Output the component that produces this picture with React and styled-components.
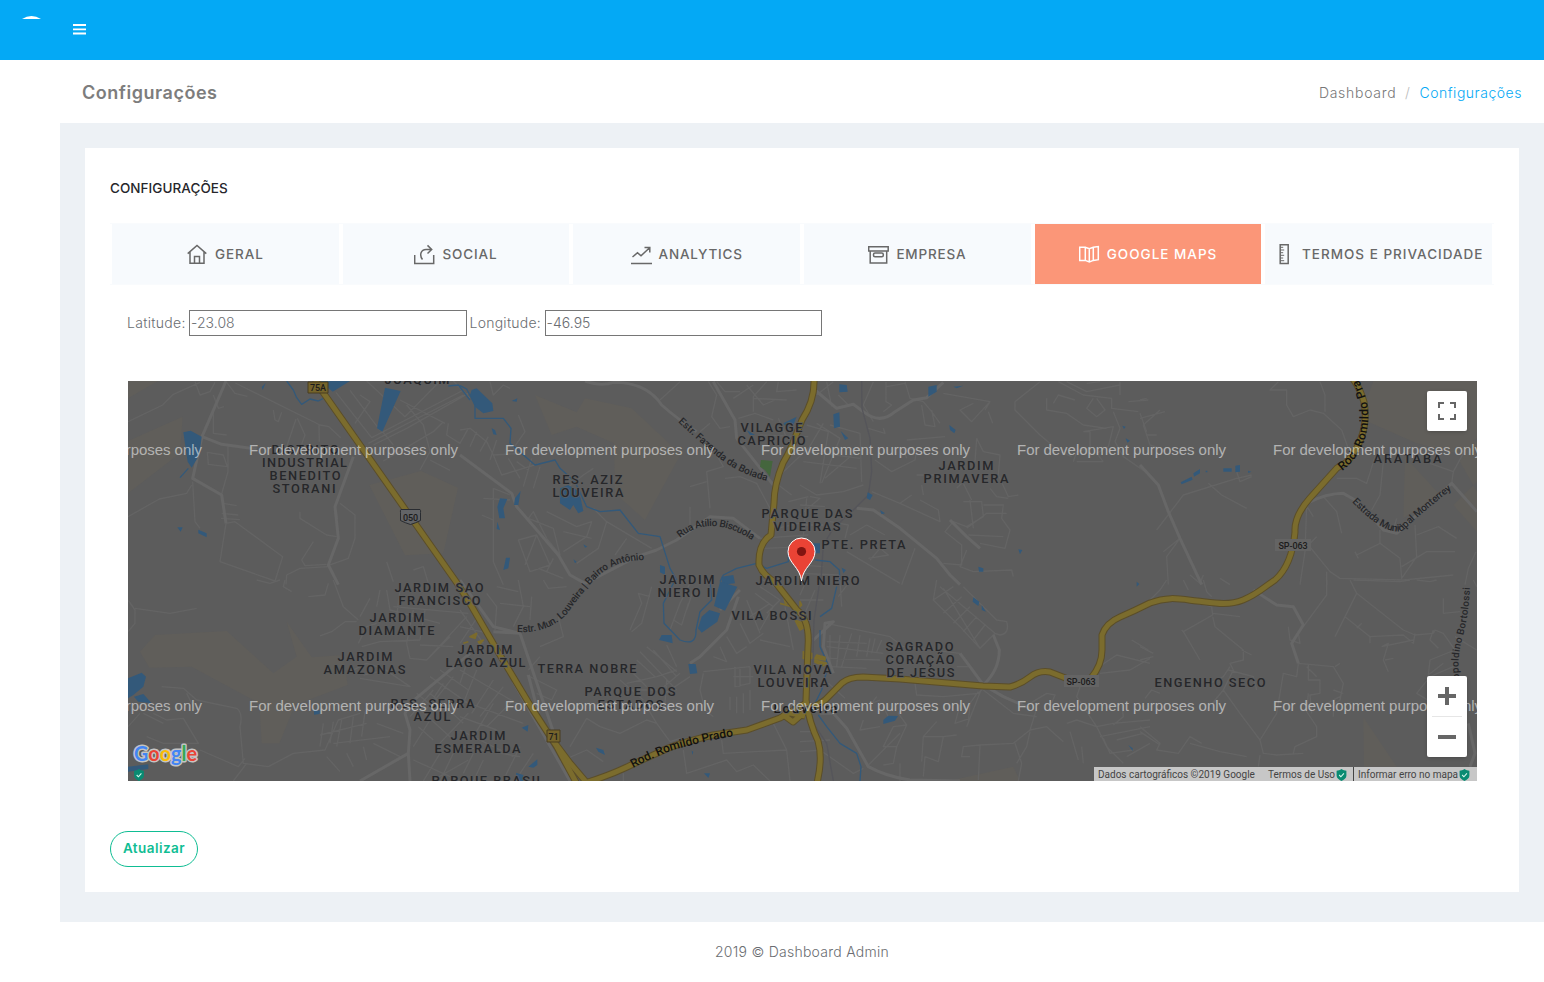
import React from 'react';
import styled, { createGlobalStyle, css } from 'styled-components';

const GlobalStyle = createGlobalStyle`
  *, *::before, *::after { box-sizing: border-box; }
  body {
    margin: 0;
    background: #fff;
    color: #6a6d71;
    font: 300 14px/24px Inter, "Open Sans", sans-serif;
  }
`;

const Navbar = styled.header`
  display: flex;
  height: 60px;
  background: #04a9f5;
`;
const Brand = styled.div`
  width: 60px;
  padding: 15px 0 0 22px;
  line-height: 0;
`;
const MenuButton = styled.button`
  width: 39px;
  height: 58px;
  padding: 0;
  border: 0;
  background: none;
  display: grid;
  place-items: center;
`;
const Content = styled.main`
  margin-left: 60px;
`;
const TitleBar = styled.div`
  display: flex;
  justify-content: space-between;
  align-items: center;
  height: 63px;
  padding: 3px 22px 0;
`;
const PageTitle = styled.h4`
  margin: 0;
  font-size: 18px;
  font-weight: 600;
  letter-spacing: 0.53px;
  color: #7d7d7d;
`;
const Crumbs = styled.nav`
  display: flex;
  font-size: 14px;
  letter-spacing: 0.72px;
  color: #777;
`;
const Slash = styled.span`
  width: 23px;
  text-align: center;
  color: #bbb;
`;
const Current = styled.span`
  color: #04a9f5;
  letter-spacing: 0.53px;
`;
const Backdrop = styled.div`
  height: 799px;
  padding: 25px 25px 30px;
  background: #edf1f5;
`;
const Card = styled.section`
  height: 744px;
  padding: 28px 25px 25px;
  background: #fff;
`;
const CardTitle = styled.h3`
  margin: 0 0 23px;
  font-size: 13.5px;
  font-weight: 500;
  line-height: 24px;
  letter-spacing: 0.05px;
  color: #26262b;
`;
const Tabs = styled.ul`
  display: flex;
  height: 62px;
  margin: 0;
  padding: 0;
  list-style: none;
  border: solid #f9fbfd;
  border-width: 1px 0;
`;
const Tab = styled.li`
  flex: 1 1 0;
  min-width: 0;
  margin: 0 2px;
  display: flex;
  align-items: center;
  justify-content: center;
  gap: 7px;
  white-space: nowrap;
  font-size: 13.5px;
  font-weight: 550;
  letter-spacing: ${(p) => p.$track};
  color: #686868;
  background: #f7fafd;
  ${(p) => p.$active && css`
    color: #fff;
    background: #fb9678;
  `}
`;
const Fields = styled.div`
  display: flex;
  align-items: center;
  height: 26px;
  margin: 25px 0 45px 17px;
`;
const FieldLabel = styled.label`
  width: ${(p) => p.$width}px;
  white-space: nowrap;
  letter-spacing: ${(p) => p.$track};
`;
const Field = styled.input`
  width: 277.5px;
  height: 26px;
  margin-right: 3px;
  padding: 0 1px 2px;
  border: 1px solid #767676;
  outline: 0;
  color: #6a6d71;
  font: inherit;
  letter-spacing: 0.05px;
`;
const MapFrame = styled.div`
  position: relative;
  width: 1349px;
  height: 400px;
  margin: 0 0 50px 18px;
  overflow: hidden;
  background: #5c5c5c;
`;
const MapSvg = styled.svg`
  display: block;
`;
const MapControl = styled.div`
  position: absolute;
  right: 10px;
  ${(p) => (p.$bottom ? `bottom: ${p.$bottom}px;` : 'top: 10px;')}
  width: 40px;
  height: ${(p) => p.$height}px;
  border-radius: 2px;
  background: #fff;
  box-shadow: 0 1px 4px -1px rgba(0, 0, 0, 0.3);
`;
const Attribution = styled.div`
  position: absolute;
  right: 0;
  bottom: 0;
  display: flex;
  align-items: center;
  width: 383px;
  height: 14px;
  background: rgba(245, 245, 245, 0.7);
  font: 400 10px/14px Roboto, sans-serif;
  color: #444;
  white-space: nowrap;
`;
const Credit = styled.span`
  display: flex;
  align-items: center;
  height: 14px;
  width: ${(p) => p.$width}px;
  padding: 1px 0 0 4px;
  gap: 1px;
  border-left: ${(p) => (p.$line ? '1px solid #444' : '0')};
`;
const UpdateButton = styled.button`
  display: block;
  width: 88px;
  height: 36px;
  padding: 0 0 2px;
  border: 1px solid #0fbd93;
  border-radius: 18px;
  background: #fff;
  color: #0fbd93;
  font: 600 13.5px Inter, sans-serif;
  letter-spacing: 0.45px;
`;
const Footer = styled.footer`
  height: 60px;
  line-height: 60px;
  text-align: center;
  letter-spacing: 0.26px;
`;

const icons = {
  home: <><path d="M.7 9.6 10 1.5l9.300 8.100M3 8v11.300h14V8" /><path d="M7.500 19v-6.500h5V19" /></>,
  share: <><path d="M.7 11v8.400h19V11" /><path d="M8.500 15.500C5 11 7 5.500 12 5.500h5.500M13.500 1.400l4.200 4.100-4.200 4" /></>,
  chart: <><path d="M0 19.500h21M1.500 13l5-4.200 3.500 3 8.600-8M13.500 3.600h5.300v5" /></>,
  box: <><path d="M.7 2.700h19.500v4.200H.7zM2.200 6.900v12.200h16.500V6.900" /><rect x="5.500" y="9" width="9.800" height="3.800" rx="1.500" /></>,
  map: <><path d="M.7 3.200h5.600l4 1.400 4-1.400 5-.7v13.200l-5 .7-4 1.600-4-1.600H.7zM6.300 3.200v13.200M10.300 4.600V18M14.300 3.200v13.200" /></>,
  ruler: <><path d="M6.200.7h8v18.800h-8z" /><path d="M6.200 3.300h3M6.200 6h4M6.200 8.700h3M6.200 11.300h4M6.200 14h3M6.200 16.700h4" strokeWidth="1" /></>,
};
const TabIcon = ({ name }) => (
  <svg width="21" height="21" viewBox="0 0 21 21" fill="none" stroke="currentColor" strokeWidth="1.5">{icons[name]}</svg>
);

const Shield = (props) => (
  <svg width="11" height="12" viewBox="0 0 11 12" {...props}>
    <path d="M5.5 0C7 1.2 8.8 1.6 10.4 1.7v5.1c0 2.4-2.5 3.8-4.9 5.2C3.1 10.6.6 9.2.6 6.8V1.7C2.2 1.6 4 1.2 5.5 0z" fill="#098b72" />
    <path d="m3.2 6 1.7 1.8 3-3.5" fill="none" stroke="#d5f7ed" strokeWidth="1.1" />
  </svg>
);

const tabs = [
  ['home', 'GERAL', '0.9px'],
  ['share', 'SOCIAL', '0.9px'],
  ['chart', 'ANALYTICS', '0.8px'],
  ['box', 'EMPRESA', '0.8px'],
  ['map', 'GOOGLE MAPS', '1px'],
  ['ruler', 'TERMOS E PRIVACIDADE', '1px'],
];

// Neighbourhood names: text, left edge, baseline, width.
const places = [
  ['JOAQUIM', 385, 384.5, 65], ['DISTRITO', 272, 455, 67], ['INDUSTRIAL', 262.5, 467.5, 85],
  ['BENEDITO', 270, 480.5, 71], ['STORANI', 273, 493.5, 63], ['JARDIM SAO', 395, 592.5, 89],
  ['FRANCISCO', 399, 605.5, 82], ['JARDIM', 370, 622.5, 55], ['DIAMANTE', 359, 635.5, 76],
  ['JARDIM', 338, 661.5, 55], ['AMAZONAS', 324, 674.5, 82], ['JARDIM', 458, 654.5, 55],
  ['LAGO AZUL', 446, 667.5, 80], ['RES. SERRA', 391, 708.5, 84], ['AZUL', 414, 721.5, 37],
  ['JARDIM', 451, 740.5, 55], ['ESMERALDA', 435, 753.5, 86], ['PARQUE BRASIL', 432, 785.5, 112],
  ['TERRA NOBRE', 538, 673.5, 99], ['PARQUE DOS', 585, 696.5, 91], ['ESTADOS', 598, 709.5, 66],
  ['RES. AZIZ', 553, 484.5, 70], ['LOUVEIRA', 553, 497.5, 71], ['VILAGGE', 741, 432.5, 62],
  ['CAPRICIO', 738, 445.5, 68], ['PARQUE DAS', 762, 518.5, 91], ['VIDEIRAS', 774, 531.5, 67],
  ['PTE. PRETA', 822, 549.5, 84], ['JARDIM NIERO', 756, 585.5, 104], ['JARDIM', 660, 584.5, 55],
  ['NIERO II', 658, 597.5, 58], ['VILA BOSSI', 732, 620.5, 80], ['VILA NOVA', 754, 674.5, 78],
  ['LOUVEIRA', 758, 687.5, 71], ['SAGRADO', 886, 651.5, 68], ['CORAÇÃO', 886, 664.5, 69],
  ['DE JESUS', 887, 677.5, 68], ['JARDIM', 939, 470.5, 55], ['PRIMAVERA', 924, 483.5, 85],
  ['ARATABA', 1374, 463.5, 68], ['ENGENHO SECO', 1155, 687.5, 111],
];

// Names that follow a road: id, path, text, length, colour, size.
const roadNames = [
  ['rn1', 'M678 422 Q695 438 712 452 Q735 473 767 481', 'Estr. Fazenda da Boiada', 108, '#26272a', 10],
  ['rn2', 'M680 538 Q710 513 752 540', 'Rua Atílio Biscuola', 78, '#26272a', 10],
  ['rn3', 'M517 632 Q548 634 567 614 Q592 579 606 570 Q622 560 645 560', 'Estr. Mun. Louveira | Bairro Antônio', 154, '#26272a', 10],
  ['rn4', 'M633 768 Q650 759 670 751 Q700 742 735 736', 'Rod. Romildo Prado', 106, '#111', 12],
  ['rn5', 'M1342 471 Q1371 449 1368 408 Q1364 384 1348 362', 'Rod. Romildo Prado', 116, '#111', 12],
  ['rn6', 'M1352 502 Q1387 538 1404 530 Q1416 517 1455 487', 'Estrada Municipal Monterrey', 125, '#26272a', 10],
  ['rn7', 'M1462 690 Q1455 665 1462 640 Q1469 615 1470 585', 'Leopoldino Bortolossi', 104, '#26272a', 10],
];

const highways = [
  'M315 379 320 388 457 583 472 607 497 650 533 710 557 747 577 784',
  'M555 743 570 763 587 783',
  'M585 783 Q608 776 627 767 T660 752 Q672 745 713 735 L747 730 780 718 808 702',
  'M805 710Q822 705 830 695L842 683Q849 677 863 677L900 679 983 686 1010 687Q1021 684 1030 677T1050 672L1068 679',
  'M1091 678Q1102 665 1102 650V635Q1106 623 1120 617T1150 603C1168 596 1180 599 1197 601S1228 606 1243 600 1264 587 1275 580Q1292 565 1295 532Q1294 516 1310 498L1337 468 1347 462Q1370 434 1364 402 1360 388 1353 379',
  'M814 379Q815 400 802 420L798 430Q791 450 783 463 774 485 774 503L771 535Q758 543 759 565 763 575 775 582L797 610Q810 620 808 647L806 700Q809 722 818 741 823 758 817 783',
  'M782 714 793 722 808 709M785 712 805 716',
];

const tileTop = 375;
const tileBottom = 580;
const tiles = [
  {
    x: 120, y: tileTop,
    land: 'M24 18h90L24 70zM188 125 180 235 24 355V198zM748 330 903 288 1014 338 970 535 855 541z',
    main: 'M318 18 246 185 305 208 410 222M246 185 218 310 305 360 318 445M645 395 655 490 625 570 655 629M700 245 645 395 650 435',
    roads: 'M24 140 128 90 160 58 240 22M225 20 240 60 270 50 285 22M320 22 345 55 382 64M346 24 600 150 627 155 662 188M280 110 280 175 320 180M280 60 295 100 312 95M460 105 465 135 475 140 485 112M528 132 500 215 535 235 555 180 532 130M597 150 598 200M262 232 310 240 322 275 265 268zM324 210 324 290 304 360M218 320 225 440 240 460M24 425 118 372 200 355 215 330M310 385 350 392M305 415 355 420M303 430 360 434M318 445 345 440 488 545 465 618 300 560zM540 410 540 430 620 480 650 485M580 500 545 555 555 572 620 568M660 385 705 420 705 490 685 550 630 570M625 575 540 580 500 600 498 628M648 52 755 188M690 46 780 166M740 18 855 125 960 18M720 60 750 80 705 145M755 188 1025 48M745 205 1030 60M760 210 860 160 1045 55M860 90 910 150 930 230 900 285M840 75 975 145M780 160 820 210M790 258 940 170 970 140M930 255 990 286M985 145 980 180 1020 205 1045 160M1000 18 1050 70M800 560 820 620M880 585 910 575 925 625',
    water: 'M190 172 212 167 245 185 238 240 215 278 203 260zM795 38 842 48 787 170 771 160zM602 18H690L638 50zM437 24 428 45 425 36zM172 457 188 457 182 470zM235 464 260 475 260 487 235 475z',
    stream: 'M500 18 520 45 530 68 545 88 570 72 595 78 620 65M205 280 180 308M985 33 1015 30 1050 75',
  },
  {
    x: 460, y: tileTop,
    land: 'M225 60 350 112 375 70 515 100 662 238 555 435 465 355 462 205 350 155 275 180z',
    main: 'M375 18Q425 35 460 22 Q560 22 605 90 Q650 130 710 170M0 240 155 355 170 395 295 540 330 600 375 625M900 490 820 430 750 425 650 495 590 525 530 545 375 625M760 20 825 135 830 190 940 330',
    roads: 'M745 20 770 60 755 125 780 160 810 155M770 20 795 50 840 50M600 75 660 20M820 70 880 30M860 30 910 90 945 75M880 70 980 75M920 20 880 65 880 110M955 20 950 50 1010 45M720 170 750 145M835 130 885 115 940 135M955 130 980 190M900 180 1045 185M960 300 1045 220M955 330 995 360M1045 365 985 380M930 400 890 325 840 305 795 310M770 240 790 275 740 290 750 400M690 335 740 320M690 395 690 470M90 20 100 60 130 30 150 40M0 165 30 160 80 200 100 240 180 235M50 170 30 215M85 185 60 230M110 195 90 255M160 220 195 170 175 120M100 240 125 300 240 265M145 250 180 310M215 250 190 335M240 275 220 340M170 260 205 285M100 340 150 360M70 370 150 375M65 420 100 435M100 340 100 560 130 629M205 430 280 460 300 540 260 490 220 410zM175 495 230 480 270 570 210 590zM230 480 195 570M260 410 350 455 395 440 380 485 310 530M310 470 395 490M320 340 370 300 400 280M400 400 440 440 575 520M440 440 415 520 350 565M500 490 465 540M950 460 1040 440M900 490 1045 480M910 520 1045 515M280 550 260 590M235 580 310 610',
    water: 'M35 45 50 40 97 85 100 108 70 115 45 95 30 60zM95 160 105 165 110 180 100 178zM155 78 172 70 170 80zM300 340 325 330 350 345 362 370 370 408 355 415 340 390 330 405 300 385zM182 348 175 390 162 390 165 370zM120 370 142 372 130 400 135 430 118 430 112 395zM112 440 120 465 110 462zM138 548 150 548 145 580 130 585zM970 145 1010 125 1000 150 975 152zM860 165 885 180 870 180zM600 570 615 575 615 600 600 592zM785 605 820 600 825 625 785 629zM370 508 382 515 375 518zM340 553 350 560 345 565z',
    stream: 'M0 32 20 42 45 90 45 130 130 130 153 160 150 205 225 270 285 255 300 280 345 320 380 395 420 410 480 405 535 475 600 485 630 580 650 615M780 620 790 600 830 580 890 565 920 580 985 560 985 520',
    green: 'M903 255 938 258 930 305 915 285 900 275z',
  },
  {
    x: 800, y: tileTop,
    main: 'M45 45 110 100 160 88 190 110Q240 150 285 110L340 75 380 68 430 22M170 400 220 405 300 460 410 550 450 600 480 629M450 435 500 485 540 520',
    roads: 'M50 60 100 20M95 95 80 20M115 60 145 90M220 20 190 90 220 140M258 20 258 80 275 90 250 110M315 20 330 70 370 80 395 110 420 145M260 35 315 25M365 90 375 150 405 155 395 105M430 55 570 80 555 105M570 80 515 140 480 105 520 85M565 110 578 145M205 160 255 175 250 160M225 255 275 290 345 255 350 225 310 220 320 250M320 195 435 185M350 300 420 300M365 330 370 360M0 330 50 360 130 350 190 330M20 150 85 170 60 325M50 145 120 190 65 325M90 150 180 175 185 320M20 230 180 250M10 260 170 280M75 310 185 215M20 230 70 145M215 350 300 385 420 440 415 405 360 375M300 385 335 360M490 325 515 375M530 190 550 230 600 240 595 300 625 365 655 360M530 190 525 260M570 340 590 365 625 370M490 380 545 380 550 425 500 455 460 440 435 470 485 510 485 570 430 565M550 390 610 390 605 430 630 465 615 520 540 505M500 460 560 415 620 415M505 480 610 485M510 375 520 460M470 340 500 310M500 525 480 575 520 590 635 585 640 605M345 520 305 629M150 480 200 450 255 480M0 420 60 370 30 365M0 390 75 395M0 450 70 450M20 370 10 485M90 440 145 450 135 490M205 550 265 540 240 520 210 555M140 530 300 625M0 570 70 575M0 595 120 600M720 20 645 80 645 105 720 180 780 230 815 245M775 20 850 60 935 70 935 100 1015 110M800 20 860 50 960 30M740 70 740 105 800 115 850 150 920 160M850 170 870 170 870 220 830 230 820 260M850 170 940 155 925 215 890 235 910 260M880 70 860 100 890 125 915 105 890 70M860 25 900 20M960 20 960 60M760 85 775 60 825 75M830 260 910 260M940 110 960 160 945 200 970 245 1050 300M985 80 1045 75M1020 115 1040 170',
    rail: 'M185 18 186 100 210 190 215 290 205 360 160 405 100 460 70 510 62 629',
    water: 'M118 28 140 30 143 50 118 52zM385 35 410 30 410 50 385 65zM100 118 118 112 120 155 102 160zM460 35 490 32 470 40zM122 168 145 190 135 195zM448 150 467 165 463 175 450 165zM203 352 218 360 210 375 200 370zM240 405 255 415 245 418zM40 505 60 505 60 535 42 535zM655 523 667 525 660 538zM535 575 550 580 550 590 537 590zM967 152 977 155 972 162zM977 190 990 197 982 203zM125 578 138 585 130 595z',
    stream: 'M45 555 90 560 118 585 120 629',
  },
  {
    x: 1140, y: tileTop,
    land: 'M700 18H1011V190L950 235 830 205 660 130zM795 245 900 360 790 430zM975 190 1011 200V320L940 390 1011 470V350L960 260z',
    main: 'M0 270 55 330 85 410 120 490 185 629M500 385Q560 355 610 355 L645 375 695 425 730 465 770 475 935 325 1011 410',
    roads: 'M415 20 390 45 440 45 440 90 460 125 510 105 550 115 605 165 630 235M540 20 555 60 555 110M0 75 20 70M0 130 75 110M10 150 60 105M10 150 30 210 75 225M20 180 50 180M50 465 130 360 290 310 335 300M290 290 300 320 335 305M205 325 245 360 320 400M120 490 80 545 85 629M70 530 120 490M240 610 270 629M590 310 650 310 680 325 705 245M730 260 720 360 695 405M550 365 590 410 605 475M495 385 520 425M500 390 495 530 480 629M505 510 570 590 600 610 790 615 940 600M505 510 530 485M560 590 560 629M650 540 720 505 720 465M645 530 655 550M720 505 780 550 785 610 830 545 825 450M785 575 860 530 945 530M830 480 895 455 950 490M935 325 940 290 870 265M940 290 970 235M770 430 760 465M150 600 180 625 190 600M1008 530 985 580 975 629',
    water: 'M122 322 155 305 158 314 125 328zM160 295 180 282 180 295 162 305zM250 280 275 280 275 290 250 290zM286 272 300 270 300 290 286 292zM197 287h5v5h-5zM324 287l10 3-9 4z',
  },
  {
    x: 120, y: tileBottom,
    land: 'M60 215 105 165 320 153 460 280 530 230 500 125 575 232 670 225 683 315 525 375 478 490H425L418 370 215 260 88 263z',
    main: 'M720 603 865 520 870 450 855 400 870 370 1050 220M865 520 870 603',
    roads: 'M640 0 670 80 715 120M24 60 45 90 45 130 24 155M45 85 150 100 230 85M410 0 450 10 480 0M495 0 490 20 515 35M565 50 615 45 625 10M600 168 635 155 675 125 710 125M750 55 720 110M780 30 770 80M800 30 810 90 960 130M820 80 1045 100M840 30 830 110M880 90 860 190M915 90 900 180M715 190 740 140 770 130M725 200 780 185 900 180M860 190 870 235 920 240 990 170M900 195 1000 200M1040 110 920 240M680 280 740 250 790 265 870 320 720 295M730 285 800 270M725 240 750 235M125 320 190 325 230 360 350 385Q370 400 360 440L370 550 445 560M200 340 225 390M100 400 140 420 190 415 235 490 130 490 80 470M70 400 130 430M24 440 60 400M240 510 355 560 375 535M380 550 340 603M445 560 520 520 615 510 655 420 720 400M610 430 600 500M640 425 630 490M665 420 650 500M700 410 690 490M735 395 725 470M600 465 740 430M620 530 660 575M640 490 810 470M680 520 700 560M730 500 740 540M760 490 840 530M770 430 850 460M930 340 1030 430M940 330 870 410M970 310 910 400M1000 290 930 380M930 290 1045 370M960 270 1045 330M890 340 950 390M880 370 1000 480M895 440 940 480M930 420 880 500M1045 400 950 500M960 520 910 603M1000 520 960 603M880 540 1020 603M940 600 1045 540',
    water: 'M24 295 65 278 78 290 70 320 40 345 24 355zM42 350 70 342 95 370 55 365zM24 560 85 553 85 567 24 575zM582 388 600 392 598 402 582 404z',
  },
  {
    x: 460, y: tileBottom,
    main: 'M0 0 100 140 180 160 330 603M100 155 180 160M835 50 800 150 720 230 690 250M160 305 330 603M780 90 840 30M205 285 235 400',
    roads: 'M175 0 190 80 160 140M80 40 110 80 105 150M110 20 175 35M250 0 265 25 320 20M295 110 310 170 240 200M210 120 215 50M120 70 210 80M0 90 70 190M0 140 85 160M0 190 60 100M200 285 290 330 275 360 230 340M240 230 205 270M510 150 545 70 535 40 570 50M515 155 545 130 575 20M630 150 660 70 690 10M640 120 665 135 685 70M700 30 680 90M560 200 620 250 650 275M530 240 585 290M510 270 560 320M500 310 590 290 650 270M490 330 600 330 660 280M540 215 650 330M580 210 650 290M620 195 650 260M480 300 550 360M620 300 615 370M600 350 690 290M560 380 590 430 630 485 660 475M730 280 720 330 735 390 760 410M730 275 870 260M825 260 825 320 870 310 870 260M840 260 840 320M820 290 880 290M780 200 800 245 760 230M800 170 830 220 860 200M840 130 870 190 910 160M860 60 900 160M885 40 940 80 900 150M900 20 960 60 920 100M910 0 990 50M930 70 870 110M975 80 1000 210M990 200 900 180M810 350 810 390M830 350 830 400M850 340 850 400M870 330 870 390M330 500 380 415 420 440 480 460 560 420 590 430M300 545 380 510 430 545M670 510 680 580 800 540 830 575 880 555 930 603M785 480 790 520 980 510M940 430 980 510 990 603M0 270 170 370M20 250 0 310M50 270 10 370M100 300 35 400M130 320 60 410M160 360 80 440M0 410 110 450M0 360 190 430M100 370 40 470M0 450 160 530M10 500 180 530M180 500 130 600M220 520 165 603M40 520 10 580M70 540 40 603M490 580 490 603',
    water: 'M780 5 832 20 795 92 762 78zM748 90 780 100 772 125 725 158 714 145 725 110zM597 180 605 165 635 165 638 190 620 185zM685 252 707 252 712 280 690 282zM185 443 205 435 203 455zM408 503 430 510 435 525 415 515zM205 560 232 538 232 555 220 563zM168 578 190 585 190 603 170 603zM732 580 750 580 745 594zM695 512 700 515 697 525z',
    stream: 'M645 0 610 70 612 130 660 180Q710 200 708 150L720 95 755 60 750 0',
    gold: 'M965 35 985 65 975 75M1005 120 1045 135 1020 150zM30 170 50 160 45 175zM10 190 25 185M55 185 70 180 60 192zM960 70 995 80M1030 215v20h10z',
  },
  {
    x: 800, y: tileBottom,
    land: 'M445 603 640 560 660 603z',
    main: 'M40 180 100 125 75 130 70 200 100 280M60 400 100 400 140 445 205 560Q260 590 330 600L480 603M480 220 510 260 550 315 Q598 270 598 210L580 165M550 315 610 350 690 385',
    roads: 'M410 0 400 60 480 140 540 205 585 160M420 20 585 160M460 20 400 60M485 50 430 100M510 80 460 130M530 110 490 155M555 135 520 180M430 25 540 205M490 20 590 120 620 125Q630 160 600 165L585 160M80 130 270 170 310 200 480 220M90 165 90 260 200 265M120 165 110 260M155 160 125 260M180 165 170 230M80 200 250 220M85 235 240 240M210 175 200 230M225 175 215 220M245 180 230 215M80 185 200 190M470 260 510 260M345 310 350 345 430 350 535 340 550 325M230 350 215 370 240 360M545 325 500 440M535 335 510 370 505 430M480 375 465 430 510 415M550 330 640 400 710 410M690 370 740 340 765 345 755 370M710 385 690 450 640 490 540 495 490 500 485 530 510 530M690 450 740 440 790 485M690 455 680 500 650 550M810 455 835 540M845 500 850 550M645 490 665 550 655 603M540 495 535 600M320 435 290 500 250 500 280 440 320 435 295 400 320 370M290 500 280 550 250 555M410 425 370 470 365 545M370 470 430 470 415 545 375 530 370 590M300 550 300 603M430 470 470 465M250 380 270 420M190 420 180 450 240 440M200 560 300 460M0 455 40 455M0 485 90 480M0 515 70 510M60 510 160 580 190 565M840 320 830 350 890 440 940 430 1050 420M890 440 830 420 800 430M890 440 920 500 970 550M900 470 1050 440M910 475 930 520 1000 510M965 370 970 410 940 435M905 255 950 225 1050 250M995 180 1045 210M900 280 990 270 1050 235M1030 460 950 480M980 530 1050 490M120 0 125 80M145 10 115 50M85 310 135 355M0 60 70 60M20 0 0 45M45 30 10 110',
    rail: 'M60 0 42 120 38 270M20 400 80 490 100 603',
    water: 'M520 52 538 65 535 78 518 65zM545 75 558 95 545 90zM250 420 265 407 294 408 285 422 250 432zM985 495 998 505 998 513zM1010 5 1018 12 1010 20z',
    stream: 'M110 20 95 85 60 110M60 150 60 200 85 255 65 330 45 370M55 405 80 440 120 490 170 520 183 560 180 603',
    gold: 'M15 220h20v15H10zM50 225 75 232 75 240 45 235zM45 240 80 250 70 257 45 247zM0 65l5 10-5 5z',
  },
  {
    x: 1140, y: tileBottom,
    land: 'M670 412 770 560H672z',
    main: 'M340 30 410 75 460 80 490 135 455 190 475 250M985 430 1005 520 990 560',
    roads: 'M560 0 560 45 490 140M130 0 145 30M190 0 200 35 215 50M30 60 60 30 80 0M150 65 215 80 218 105 130 155 180 240M130 155 125 150M218 110 225 140 310 210 310 240 270 250 280 270 250 330M218 100 300 110M305 210 335 225M250 330 300 400 360 480 370 520 410 525 490 520M210 310 250 290 270 260M265 270 340 290 350 330M250 330 200 390 230 360M60 340 35 330 15 355M40 220 0 200M0 240 40 230M0 440 60 490 50 510 115 520 150 470 185 490M0 455 60 495M150 490 240 515 320 530M360 480 410 400 430 280 470 290 475 250 580 260 610 310 600 360 570 380M585 260 600 250M610 340 580 330M600 350 560 370M505 255 505 300 540 300 540 340 510 345 515 400M505 340 500 395 530 440 530 470 465 500 460 520M500 260 530 290M580 360 580 410M360 525 355 560M630 0 650 40 585 170M650 40 790 150 825 165 880 160M615 110 690 170 790 165 820 190 825 160M650 145 665 130M690 170 690 190M725 200 745 190 730 240 745 275M725 200 820 180M735 240 760 235M880 160 885 150 910 160 945 210 870 240 865 285 910 250M880 150 870 180 895 205M945 170 1010 210M910 55 910 100 960 95M1000 0 1010 20M940 260 870 290 830 340 880 370M640 0 780 5 810 0M830 0 870 5 890 0M445 140 450 180 480 190 475 160',
    water: 'M209 377 215 375 213 385z',
  },
];

const Tile = ({ t }) => (
  <g transform={`translate(${t.x} ${t.y}) scale(.33333)`} fill="none" strokeLinejoin="round">
    {t.land && <path d={t.land} fill="#605e5a" />}
    <path d={t.roads} stroke="#646464" strokeWidth="4" />
    <path d={t.main} stroke="#676767" strokeWidth="9" />
    {t.rail && <path d={t.rail} stroke="#55555a" strokeWidth="4" />}
    {t.water && <path d={t.water} fill="#33597a" />}
    {t.stream && <path d={t.stream} stroke="#33597a" strokeWidth="4" />}
    {t.green && <path d={t.green} fill="#44663d" />}
    {t.gold && <path d={t.gold} fill="#7b6b2d" stroke="#7b6b2d" strokeWidth="5" />}
  </g>
);

const RegionMap = () => (
  <MapSvg width="1349" height="400" viewBox="128 381 1349 400">
    {tiles.map((t) => <Tile key={`${t.x}-${t.y}`} t={t} />)}
    <g fill="none" strokeLinejoin="round">
      {highways.map((d) => <path key={d} d={d} stroke="#5b4e29" strokeWidth="7" />)}
      {highways.map((d) => <path key={d} d={d} stroke="#7b6c2d" strokeWidth="5" />)}
    </g>
    <g fontFamily="Roboto, sans-serif" textAnchor="middle" fontSize="9" fontWeight="500" fill="#1c1c1c">
      <path d="M308 382h20v11h-20zM547 730h13v12h-13z" fill="#75642b" stroke="#493d21" />
      <path d="M401 509.500h19q1 1 .5 3v8q-5 2.500-10 4-5-1.500-10-4v-8q-.5-2 .5-3z" fill="#626467" stroke="#292c31" />
      <path d="M1275 539h36v12h-36zM1064 675h35v12h-35z" fill="#646464" />
      <text x="318" y="391">75A</text>
      <text x="410.500" y="520.500" textLength="15">050</text>
      <text x="553.500" y="739.500">71</text>
      <text x="1293" y="548.500" textLength="29">SP-063</text>
      <text x="1081" y="684.500" textLength="29">SP-063</text>
    </g>
    <g transform="translate(-.5 -.8)" fontFamily="Roboto, sans-serif" fontWeight="500" fontSize="12.800" fill="#26272a" stroke="#5e5e5e" strokeWidth="1.500" paintOrder="stroke">
      {places.map(([s, x, y, w]) => <text key={`${x}-${y}`} x={x} y={y} textLength={w}>{s}</text>)}
      <text x="774" y="714" textLength="64" fill="#191919">Louveira</text>
    </g>
    <g fontFamily="Roboto, sans-serif" fontWeight="500">
      {roadNames.map(([id, d, s, len, fill, size]) => (
        <React.Fragment key={id}>
          <path id={id} d={d} fill="none" />
          <text fill={fill} fontSize={size}><textPath href={`#${id}`} textLength={len}>{s}</textPath></text>
        </React.Fragment>
      ))}
    </g>
    <g fontFamily="'Liberation Sans', Arial, sans-serif" fontSize="15" fill="#fff" fillOpacity=".54">
      {[455, 711].map((y) => [-7, 249, 505, 761, 1017, 1273].map((x) => (
        <text key={`${x}-${y}`} x={x} y={y} textLength="209">For development purposes only</text>
      )))}
    </g>
    <path d="M801.500 581C800 567 788 563 788 551.500a13.500 13.500 0 0 1 27 0C815 563 803 567 801.500 581z" fill="#ea4335" stroke="#fff" />
    <circle cx="801.500" cy="551.500" r="4.600" fill="#811411" />
    <text x="134" y="760.500" fontFamily="Lato, sans-serif" fontWeight="700" fontSize="20" textLength="63" lengthAdjust="spacingAndGlyphs" stroke="#c4c4c4" strokeWidth="3" strokeLinejoin="round" paintOrder="stroke">
      <tspan fill="#4285f4">G</tspan><tspan fill="#ea4335">o</tspan><tspan fill="#fbbc05">o</tspan><tspan fill="#4285f4">g</tspan><tspan fill="#34a853">l</tspan><tspan fill="#ea4335">e</tspan>
    </text>
    <Shield x="133.500" y="769" />
  </MapSvg>
);

export default function App() {
  return (
    <>
      <GlobalStyle />
      <Navbar>
        <Brand>
          <svg width="19" height="4" viewBox="0 0 19 4"><path d="M0 3Q9.500-2.800 19 3z" fill="#fff" /></svg>
        </Brand>
        <MenuButton>
          <svg width="13" height="11" viewBox="0 0 13 11"><path d="M0 1h13M0 5.300h13M0 9.500h13" stroke="#fff" strokeWidth="1.800" /></svg>
        </MenuButton>
      </Navbar>
      <Content>
        <TitleBar>
          <PageTitle>Configurações</PageTitle>
          <Crumbs><span>Dashboard</span><Slash>/</Slash><Current>Configurações</Current></Crumbs>
        </TitleBar>
        <Backdrop>
          <Card>
            <CardTitle>CONFIGURAÇÕES</CardTitle>
            <Tabs>
              {tabs.map(([icon, label, track]) => (
                <Tab key={label} $track={track} $active={icon === 'map'}><TabIcon name={icon} />{label}</Tab>
              ))}
            </Tabs>
            <Fields>
              <FieldLabel $width={62} $track="0.3px">Latitude:</FieldLabel><Field defaultValue="-23.08" />
              <FieldLabel $width={75} $track="0.25px">Longitude:</FieldLabel><Field defaultValue="-46.95" />
            </Fields>
            <MapFrame>
              <RegionMap />
              <MapControl $height={40}>
                <svg width="40" height="40" viewBox="0 0 40 40" fill="none" stroke="#666" strokeWidth="2"><path d="M12 17v-5h5M23 12h5v5M28 23v5h-5M17 28h-5v-5" /></svg>
              </MapControl>
              <MapControl $height={81} $bottom={24}>
                <svg width="40" height="81" viewBox="0 0 40 81" fill="none"><path d="M11 20h18M20 11v18M11 61h18" stroke="#666" strokeWidth="4" /><path d="M5 40.500h30" stroke="#e6e6e6" /></svg>
              </MapControl>
              <Attribution>
                <Credit $width={170}>Dados cartográficos ©2019 Google</Credit>
                <Credit $width={89}>Termos de Uso<Shield /></Credit>
                <Credit $width={124} $line>Informar erro no mapa<Shield /></Credit>
              </Attribution>
            </MapFrame>
            <UpdateButton>Atualizar</UpdateButton>
          </Card>
        </Backdrop>
        <Footer>2019 © Dashboard Admin</Footer>
      </Content>
    </>
  );
}
